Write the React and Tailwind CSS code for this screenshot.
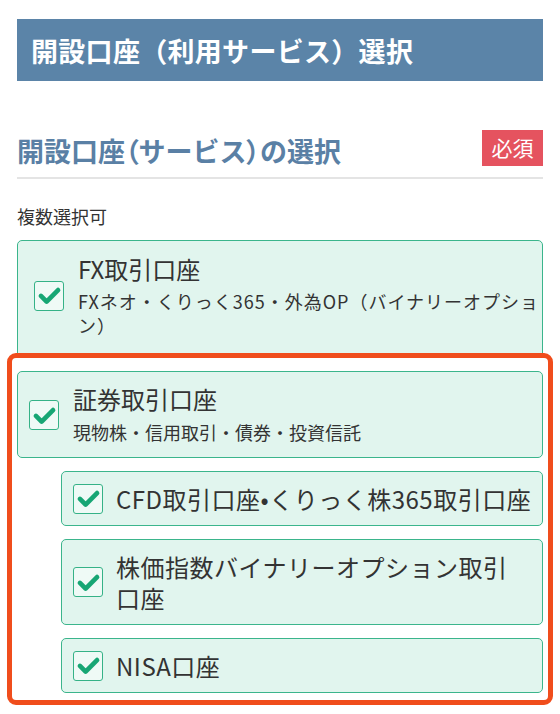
import React from 'react'

const FONT = { fontFamily: '"Noto Sans CJK JP", "Noto Sans", sans-serif' }

function CheckBox() {
  return (
    <span className="flex h-[30px] w-[30px] shrink-0 items-center justify-center rounded-[3px] border-[1.5px] border-[#35b287] bg-[#effaf6]">
      <svg viewBox="0 0 30 30" className="h-[27px] w-[27px]">
        <path
          d="M5.5 15.5 L11.8 21.8 L24.5 9"
          fill="none"
          stroke="#17a674"
          strokeWidth="5.2"
          strokeLinecap="round"
          strokeLinejoin="round"
        />
      </svg>
    </span>
  )
}

function SubOption({ children }) {
  return (
    <label className="ml-[44px] flex items-center gap-[13px] rounded-[5px] border border-[#3bb58c] bg-[#e1f5ee] py-[11px] pl-[11px] pr-[8px]">
      <CheckBox />
      <span className="text-[24px] leading-[31px] tracking-[0.5px] text-[#333]">{children}</span>
    </label>
  )
}

export default function App() {
  return (
    <div className="min-h-[714px] w-[560px] bg-white px-[17px] pt-[19px]" style={FONT}>
      {/* page header */}
      <div className="flex h-[62px] items-center bg-[#5b84a8] pl-[14px]">
        <h1 className="text-[27px] font-bold leading-none tracking-[0.3px] text-white">開設口座（利用サービス）選択</h1>
      </div>

      {/* section heading */}
      <div className="mt-[49px] flex items-start justify-between border-b-2 border-[#e4e4e4] pb-[8px]">
        <h2 className="mt-[3px] text-[27px] font-bold leading-[36px] text-[#5a80a5]">
          開設口座<span className="[font-feature-settings:'palt']">（</span>サービス
          <span className="[font-feature-settings:'palt']">）</span>の選択
        </h2>
        <span className="flex h-[36px] w-[61px] items-center justify-center bg-[#e5535f] text-[21px] text-white">必須</span>
      </div>

      <p className="mt-[23px] text-[18px] leading-[28px] text-[#333]">複数選択可</p>

      <div className="mt-[10px] flex flex-col gap-[13px]">
        {/* FX */}
        <label className="flex items-center gap-[14px] rounded-[5px] border border-[#3bb58c] bg-[#e1f5ee] pb-[20px] pl-[16px] pr-[12px] pt-[13px]">
          <CheckBox />
          <span className="flex flex-col text-[#333]">
            <span className="text-[24px] leading-[30px]">FX取引口座</span>
            <span className="mt-[5px] whitespace-nowrap text-[18px] leading-[24px] tracking-[1px]">
              FXネオ・くりっく365・外為OP（バイナリーオプショ
              <br />
              ン）
            </span>
          </span>
        </label>

        {/* securities group, highlighted */}
        <div className="relative flex flex-col gap-[13px]">
          <div className="pointer-events-none absolute -bottom-[12px] -left-[10px] -right-[10px] -top-[18px] rounded-[9px] border-[5px] border-[#f04d1c]" />

          <label className="flex items-center gap-[14px] rounded-[5px] border border-[#3bb58c] bg-[#e1f5ee] pb-[11px] pl-[11px] pr-[16px] pt-[12px]">
            <CheckBox />
            <span className="flex flex-col text-[#333]">
              <span className="text-[24px] leading-[30px]">証券取引口座</span>
              <span className="mt-[4px] text-[18px] leading-[28px]">現物株・信用取引・債券・投資信託</span>
            </span>
          </label>

          <SubOption>CFD取引口座•くりっく株365取引口座</SubOption>
          <SubOption>
            株価指数バイナリーオプション取引
            <br />
            口座
          </SubOption>
          <SubOption>NISA口座</SubOption>
        </div>
      </div>
    </div>
  )
}
